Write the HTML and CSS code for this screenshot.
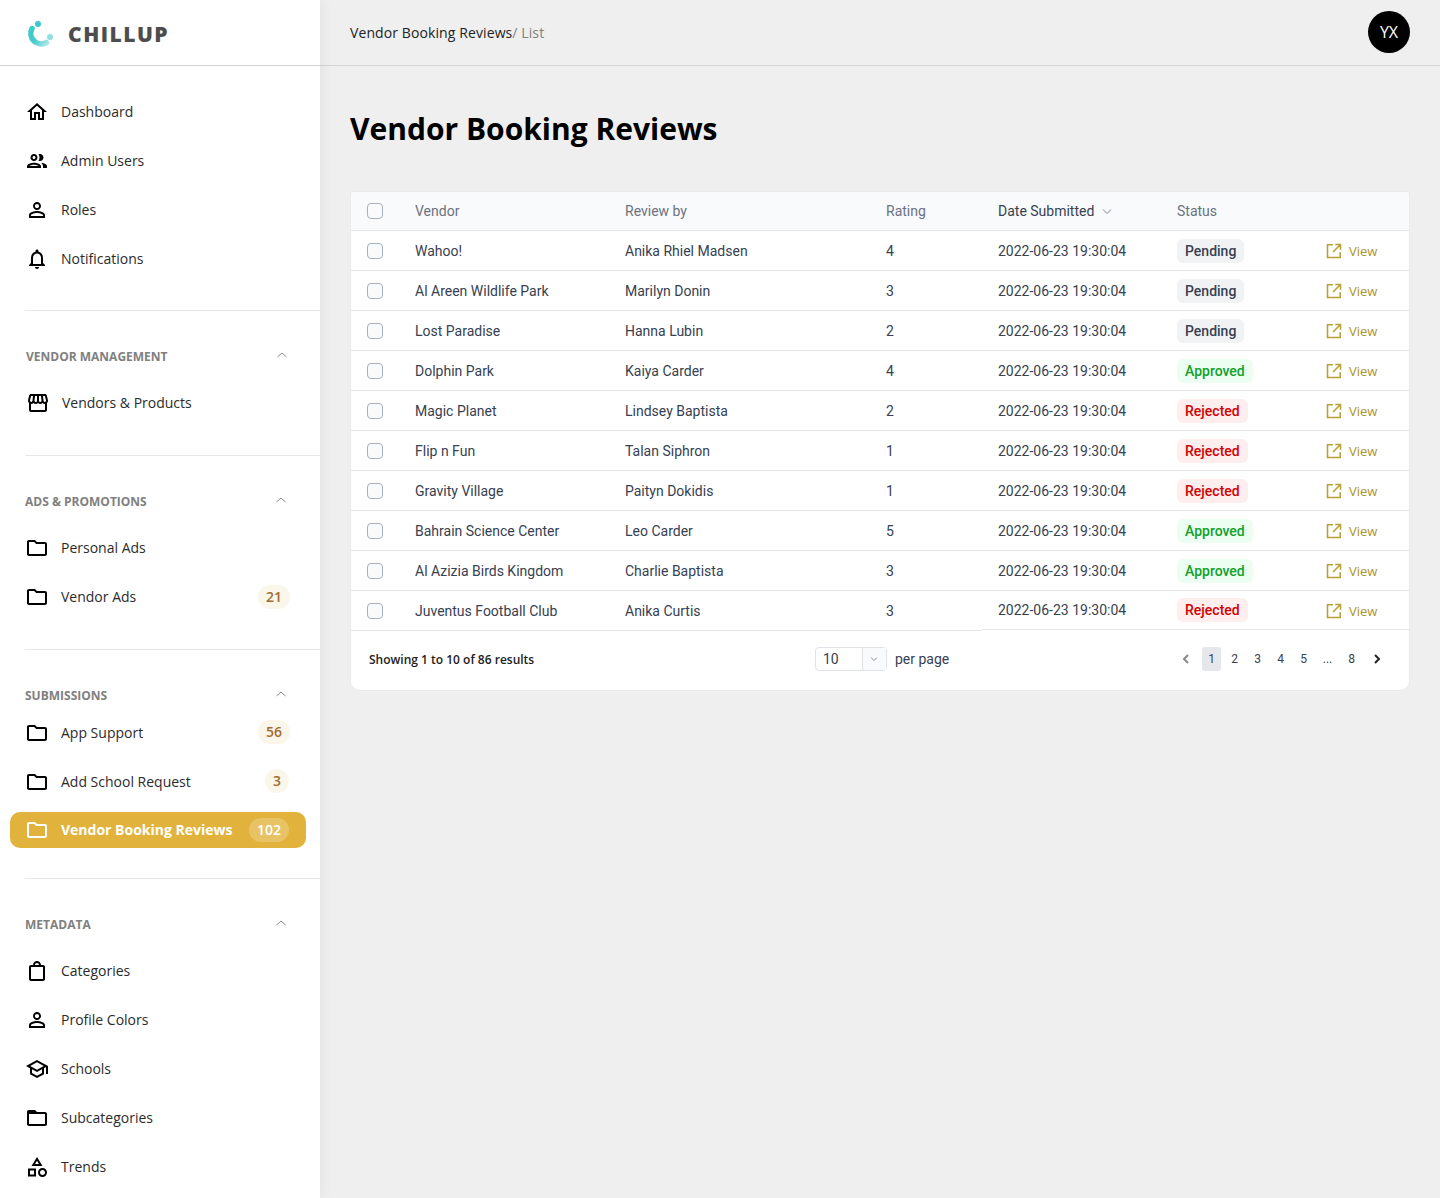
FILE: index.html
```html
<!DOCTYPE html>
<html>
<head>
  <title>Vendor Booking Reviews</title>
  <link rel="stylesheet" href="styles.css">
</head>
<body>
  <svg class="sprite" xmlns="http://www.w3.org/2000/svg">
    <symbol id="i-home" viewBox="0 0 24 24"><path d="M12 5.69l5 4.5V18h-2v-6H9v6H7v-7.81l5-4.5M12 3L2 12h3v8h6v-6h2v6h6v-8h3L12 3z"/></symbol>
    <symbol id="i-people" viewBox="0 0 24 24"><path d="M9 13.75c-2.34 0-7 1.17-7 3.5V19h14v-1.75c0-2.33-4.66-3.5-7-3.5zM4.34 17c.84-.58 2.87-1.25 4.66-1.25s3.82.67 4.66 1.25H4.34zM9 12c1.93 0 3.5-1.57 3.5-3.5S10.93 5 9 5 5.5 6.57 5.5 8.5 7.07 12 9 12zm0-5c.83 0 1.5.67 1.5 1.5S9.83 10 9 10s-1.5-.67-1.5-1.5S8.17 7 9 7zm7.04 6.81c1.16.84 1.96 1.96 1.96 3.44V19h4v-1.75c0-2.02-3.5-3.17-5.96-3.44zM15 12c1.93 0 3.5-1.57 3.5-3.5S16.93 5 15 5c-.54 0-1.04.13-1.5.35.63.89 1 1.98 1 3.15s-.37 2.26-1 3.15c.46.22.96.35 1.5.35z"/></symbol>
    <symbol id="i-person" viewBox="0 0 24 24"><path d="M12 5.9c1.16 0 2.1.94 2.1 2.1s-.94 2.1-2.1 2.1S9.9 9.16 9.9 8s.94-2.1 2.1-2.1m0 9c2.97 0 6.1 1.46 6.1 2.1v1.1H5.9V17c0-.64 3.13-2.1 6.1-2.1M12 4C9.79 4 8 5.79 8 8s1.79 4 4 4 4-1.79 4-4-1.79-4-4-4zm0 9c-2.67 0-8 1.34-8 4v3h16v-3c0-2.66-5.33-4-8-4z"/></symbol>
    <symbol id="i-bell" viewBox="0 0 24 24"><path d="M12 22c1.1 0 2-.9 2-2h-4c0 1.1.9 2 2 2zm6-6v-5c0-3.07-1.63-5.64-4.5-6.32V4c0-.83-.67-1.5-1.5-1.5s-1.5.67-1.5 1.5v.68C7.64 5.36 6 7.92 6 11v5l-2 2v1h16v-1l-2-2zm-2 1H8v-6c0-2.48 1.51-4.5 4-4.5s4 2.02 4 4.5v6z"/></symbol>
    <symbol id="i-store" viewBox="0 0 24 24"><path d="M21.9 8.89l-1.05-4.37c-.22-.9-1-1.52-1.91-1.52H5.05c-.9 0-1.69.63-1.9 1.52L2.1 8.89c-.24 1.02-.02 2.06.62 2.88.08.11.19.19.28.29V19c0 1.1.9 2 2 2h14c1.1 0 2-.9 2-2v-6.94c.09-.09.2-.18.28-.28.64-.82.87-1.87.62-2.89zm-2.99-3.9l1.05 4.37c.1.42.01.84-.25 1.17-.14.18-.44.47-.94.47-.61 0-1.14-.49-1.21-1.14L16.98 5l1.93-.01zM13 5h1.96l.54 4.52c.05.39-.07.78-.33 1.07-.22.26-.54.41-.95.41-.67 0-1.22-.59-1.22-1.31V5zM8.49 9.52L9.04 5H11v4.69c0 .72-.55 1.31-1.29 1.31-.34 0-.65-.15-.89-.41-.25-.29-.37-.68-.33-1.07zm-4.45-.16L5.05 5h1.97l-.58 4.86c-.08.65-.6 1.14-1.21 1.14-.49 0-.8-.29-.93-.47-.27-.32-.36-.75-.26-1.17zM5 19v-6.03c.08.01.15.03.23.03.87 0 1.66-.36 2.24-.95.6.6 1.4.95 2.31.95.87 0 1.65-.36 2.23-.93.59.57 1.39.93 2.29.93.84 0 1.64-.35 2.24-.95.58.59 1.37.95 2.24.95.08 0 .15-.02.23-.03V19H5z"/></symbol>
    <symbol id="i-folder" viewBox="0 0 24 24"><path d="M9.17 6l2 2H20v10H4V6h5.17M10 4H4c-1.1 0-1.99.9-1.99 2L2 18c0 1.1.9 2 2 2h16c1.1 0 2-.9 2-2V8c0-1.1-.9-2-2-2h-8l-2-2z"/></symbol>
    <symbol id="i-folder-open" viewBox="0 0 24 24"><path d="M20 6h-8l-2-2H4c-1.1 0-1.99.9-1.99 2L2 18c0 1.1.9 2 2 2h16c1.1 0 2-.9 2-2V8c0-1.1-.9-2-2-2zm0 12H4V8h16v10z"/></symbol>
    <symbol id="i-bag" viewBox="0 0 24 24"><path d="M18 6h-2c0-2.21-1.79-4-4-4S8 3.79 8 6H6c-1.1 0-2 .9-2 2v12c0 1.1.9 2 2 2h12c1.1 0 2-.9 2-2V8c0-1.1-.9-2-2-2zm-6-2c1.1 0 2 .9 2 2h-4c0-1.1.9-2 2-2zm6 16H6V8h12v12z"/></symbol>
    <symbol id="i-school" viewBox="0 0 24 24"><path d="M12 3L1 9l4 2.18v6L12 21l7-3.82v-6l2-1.09V17h2V9L12 3zm6.82 6L12 12.72 5.18 9 12 5.28 18.82 9zM17 15.99l-5 2.73-5-2.73v-3.72L12 15l5-2.73v3.72z"/></symbol>
    <symbol id="i-shapes" viewBox="0 0 24 24"><path d="M12 2l-5.5 9h11L12 2zm0 3.84L13.93 9h-3.87L12 5.84zM17.5 13c-2.49 0-4.5 2.01-4.5 4.5s2.01 4.5 4.5 4.5 4.5-2.01 4.5-4.5-2.01-4.5-4.5-4.5zm0 7c-1.38 0-2.5-1.12-2.5-2.5s1.12-2.5 2.5-2.5 2.5 1.12 2.5 2.5-1.12 2.5-2.5 2.5zM3 21.5h8v-8H3v8zm2-6h4v4H5v-4z"/></symbol>
    <symbol id="i-up" viewBox="0 0 12 12"><path d="M1.500 8L6 4l4.500 4" fill="none" stroke="currentColor" stroke-width="1"/></symbol>
    <symbol id="i-external" viewBox="0 0 16 16"><path d="M7 1.800H1.500V14.500H14.200V9.200M9.200 1.500h5.300v5.300M14.500 1.500L7 9" fill="none" stroke="currentColor" stroke-width="1.600"/></symbol>
    <linearGradient id="logo-arc" gradientUnits="userSpaceOnUse" x1="4" y1="14" x2="24" y2="28">
      <stop offset="0.3" stop-color="#3fcbcb"/>
      <stop offset="1" stop-color="#c4eeee"/>
    </linearGradient>
  </svg>

  <div class="layout">
    <aside class="sidebar">
      <div class="brand">
        <svg class="brand-mark" viewBox="0 0 30 30">
          <path d="M7 8.500A10.500 10.500 0 0 0 21.500 22.500" fill="none" stroke="url(#logo-arc)" stroke-width="5.500" stroke-linecap="round"/>
          <circle cx="13" cy="4" r="3" fill="#3cc6cf"/>
          <circle cx="25" cy="17" r="3" fill="#8fdfe0"/>
        </svg>
        <span class="brand-name">CHILLUP</span>
      </div>

      <nav class="nav-top">
        <a class="nav-item"><svg class="icon"><use href="#i-home"/></svg><span>Dashboard</span></a>
        <a class="nav-item"><svg class="icon"><use href="#i-people"/></svg><span>Admin Users</span></a>
        <a class="nav-item"><svg class="icon"><use href="#i-person"/></svg><span>Roles</span></a>
        <a class="nav-item"><svg class="icon"><use href="#i-bell"/></svg><span>Notifications</span></a>
      </nav>

      <section class="nav-group nudge">
        <div class="group-title"><span>Vendor Management</span><svg class="chev"><use href="#i-up"/></svg></div>
        <a class="nav-item"><svg class="icon"><use href="#i-store"/></svg><span>Vendors &amp; Products</span></a>
      </section>

      <section class="nav-group">
        <div class="group-title"><span>Ads &amp; Promotions</span><svg class="chev"><use href="#i-up"/></svg></div>
        <a class="nav-item"><svg class="icon"><use href="#i-folder"/></svg><span>Personal Ads</span></a>
        <a class="nav-item"><svg class="icon"><use href="#i-folder"/></svg><span>Vendor Ads</span><b class="count">21</b></a>
      </section>

      <section class="nav-group tight">
        <div class="group-title"><span>Submissions</span><svg class="chev"><use href="#i-up"/></svg></div>
        <a class="nav-item"><svg class="icon"><use href="#i-folder"/></svg><span>App Support</span><b class="count">56</b></a>
        <a class="nav-item"><svg class="icon"><use href="#i-folder"/></svg><span>Add School Request</span><b class="count inset">3</b></a>
        <a class="nav-item active"><svg class="icon"><use href="#i-folder"/></svg><span>Vendor Booking Reviews</span><b class="count inset">102</b></a>
      </section>

      <section class="nav-group">
        <div class="group-title"><span>Metadata</span><svg class="chev"><use href="#i-up"/></svg></div>
        <a class="nav-item"><svg class="icon"><use href="#i-bag"/></svg><span>Categories</span></a>
        <a class="nav-item"><svg class="icon"><use href="#i-person"/></svg><span>Profile Colors</span></a>
        <a class="nav-item"><svg class="icon"><use href="#i-school"/></svg><span>Schools</span></a>
        <a class="nav-item"><svg class="icon"><use href="#i-folder-open"/></svg><span>Subcategories</span></a>
        <a class="nav-item"><svg class="icon"><use href="#i-shapes"/></svg><span>Trends</span></a>
      </section>
    </aside>

    <div class="main">
      <header class="topbar">
        <div class="crumbs">Vendor Booking Reviews<span>/ List</span></div>
        <div class="avatar">YX</div>
      </header>

      <main class="content">
        <h1>Vendor Booking Reviews</h1>

        <div class="card">
          <table>
            <colgroup>
              <col class="c-check"><col class="c-vendor"><col class="c-review"><col class="c-rating"><col class="c-date"><col class="c-status"><col>
            </colgroup>
            <thead>
              <tr>
                <th><i class="check"></i></th>
                <th>Vendor</th>
                <th>Review by</th>
                <th>Rating</th>
                <th class="sorted">Date Submitted<svg class="sort" viewBox="0 0 12 12"><path d="M2 4.500l4 4 4-4" fill="none" stroke="currentColor"/></svg></th>
                <th>Status</th>
                <th></th>
              </tr>
            </thead>
            <tbody>
              <tr><td><i class="check"></i></td><td>Wahoo!</td><td>Anika Rhiel Madsen</td><td>4</td><td>2022-06-23 19:30:04</td><td><span class="pill pending">Pending</span></td><td><a class="view"><svg><use href="#i-external"/></svg>View</a></td></tr>
              <tr><td><i class="check"></i></td><td>Al Areen Wildlife Park</td><td>Marilyn Donin</td><td>3</td><td>2022-06-23 19:30:04</td><td><span class="pill pending">Pending</span></td><td><a class="view"><svg><use href="#i-external"/></svg>View</a></td></tr>
              <tr><td><i class="check"></i></td><td>Lost Paradise</td><td>Hanna Lubin</td><td>2</td><td>2022-06-23 19:30:04</td><td><span class="pill pending">Pending</span></td><td><a class="view"><svg><use href="#i-external"/></svg>View</a></td></tr>
              <tr><td><i class="check"></i></td><td>Dolphin Park</td><td>Kaiya Carder</td><td>4</td><td>2022-06-23 19:30:04</td><td><span class="pill approved">Approved</span></td><td><a class="view"><svg><use href="#i-external"/></svg>View</a></td></tr>
              <tr><td><i class="check"></i></td><td>Magic Planet</td><td>Lindsey Baptista</td><td>2</td><td>2022-06-23 19:30:04</td><td><span class="pill rejected">Rejected</span></td><td><a class="view"><svg><use href="#i-external"/></svg>View</a></td></tr>
              <tr><td><i class="check"></i></td><td>Flip n Fun</td><td>Talan Siphron</td><td>1</td><td>2022-06-23 19:30:04</td><td><span class="pill rejected">Rejected</span></td><td><a class="view"><svg><use href="#i-external"/></svg>View</a></td></tr>
              <tr><td><i class="check"></i></td><td>Gravity Village</td><td>Paityn Dokidis</td><td>1</td><td>2022-06-23 19:30:04</td><td><span class="pill rejected">Rejected</span></td><td><a class="view"><svg><use href="#i-external"/></svg>View</a></td></tr>
              <tr><td><i class="check"></i></td><td>Bahrain Science Center</td><td>Leo Carder</td><td>5</td><td>2022-06-23 19:30:04</td><td><span class="pill approved">Approved</span></td><td><a class="view"><svg><use href="#i-external"/></svg>View</a></td></tr>
              <tr><td><i class="check"></i></td><td>Al Azizia Birds Kingdom</td><td>Charlie Baptista</td><td>3</td><td>2022-06-23 19:30:04</td><td><span class="pill approved">Approved</span></td><td><a class="view"><svg><use href="#i-external"/></svg>View</a></td></tr>
              <tr><td><i class="check"></i></td><td>Juventus Football Club</td><td>Anika Curtis</td><td>3</td><td class="up">2022-06-23 19:30:04</td><td class="up"><span class="pill rejected">Rejected</span></td><td class="up-line"><a class="view"><svg><use href="#i-external"/></svg>View</a></td></tr>
            </tbody>
          </table>

          <div class="card-foot">
            <div class="results">Showing 1 to 10 of 86 results</div>
            <div class="per-page">
              <div class="select"><span>10</span><i><svg viewBox="0 0 12 12"><path d="M3 4.500l3 3 3-3" fill="none" stroke="currentColor"/></svg></i></div>
              <span>per page</span>
            </div>
            <div class="pager">
              <svg class="arrow prev" viewBox="0 0 12 12"><path d="M8 2L4 6l4 4" fill="none" stroke="currentColor" stroke-width="2"/></svg>
              <span class="current">1</span>
              <span>2</span><span>3</span><span>4</span><span>5</span><span class="dots">...</span><span>8</span>
              <svg class="arrow" viewBox="0 0 12 12"><path d="M4 2l4 4-4 4" fill="none" stroke="currentColor" stroke-width="2"/></svg>
            </div>
          </div>
        </div>
      </main>
    </div>
  </div>
</body>
</html>
```
FILE: styles.css
```css
* { box-sizing: border-box; }
html, body { margin: 0; height: 100%; }
body {
  font-family: "Open Sans", sans-serif;
  background: #efefef;
  color: #222;
  overflow: hidden;
}
.sprite { position: absolute; width: 0; height: 0; }
.layout { display: flex; height: 1198px; }

/* sidebar */
.sidebar {
  width: 320px;
  flex: none;
  background: #fff;
  box-shadow: 2px 0 12px rgba(0,0,0,0.06);
  position: relative;
  overflow: hidden;
}
.brand {
  height: 66px;
  display: flex;
  align-items: center;
  gap: 13px;
  padding-left: 25px;
  border-bottom: 1px solid #d4d4d4;
}
.brand-mark { width: 30px; height: 30px; margin-top: 5px; }
.brand-name {
  font-size: 21px;
  font-weight: 800;
  letter-spacing: 1.5px;
  color: #4d4d4d;
  margin-top: 2px;
}
.nav-top { padding: 21px 0 27px; }
.nav-item {
  height: 49px;
  margin: 0 14px 0 10px;
  padding: 0 16px 0 15px;
  display: flex;
  align-items: center;
  font-size: 14px;
  color: #2b2b2b;
}
.icon { width: 24px; height: 24px; margin-right: 12px; flex: none; fill: #000; }
.count {
  margin-left: auto;
  min-width: 24px;
  height: 24px;
  padding: 0 8px;
  border-radius: 12px;
  background: #fbf6ea;
  color: #a26c2e;
  font-weight: 600;
  font-size: 14px;
  line-height: 24px;
  text-align: center;
}
.count.inset { margin-right: 1px; }
.tight .count { margin-bottom: 2px; }
.nav-item.active {
  height: 36px;
  margin-top: 6px;
  border-radius: 10px;
  background: #e2b33c;
  color: #fff;
  font-weight: 700;
}
.active span { margin-bottom: 2px; }
.active .icon { fill: #fff; }
.tight .active .count { margin-bottom: 0; background: rgba(255,255,255,0.22); color: #fff; font-weight: 600; }

.nav-group {
  margin-left: 25px;
  border-top: 1px solid #e5e7eb;
  padding-top: 35px;
  padding-bottom: 28px;
}
.nav-group .nav-item { margin-left: -15px; }
.group-title {
  height: 20px;
  margin-bottom: 12px;
  padding-right: 33px;
  display: flex;
  align-items: center;
  justify-content: space-between;
  font-size: 12px;
  font-weight: 700;
  text-transform: uppercase;
  color: #808080;
}
.chev { width: 12px; height: 12px; color: #8a8a8a; margin-top: -3px; }
.nudge .group-title { padding-left: 1px; padding-right: 32px; }
.nudge .nav-item { padding-left: 16px; }
.tight { padding-bottom: 30px; }
.tight .group-title { margin-bottom: 3px; }

/* main column */
.main { flex: 1; min-width: 0; }
.topbar {
  height: 66px;
  padding: 0 30px;
  display: flex;
  align-items: center;
  justify-content: space-between;
  border-bottom: 1px solid #d4d4d4;
}
.crumbs { font-size: 14px; letter-spacing: 0.1px; color: #222; }
.crumbs span { color: #808080; }
.avatar {
  width: 42px;
  height: 42px;
  border-radius: 50%;
  background: #000;
  color: #fff;
  font-size: 16px;
  line-height: 42px;
  text-align: center;
  margin-top: -1px;
}
.content { padding: 0 30px; }
h1 {
  margin: 0;
  padding: 41px 0 40px;
  font-size: 30px;
  font-weight: 700;
  line-height: 44px;
  color: #000;
}

/* table card */
.card {
  background: #fff;
  border: 1px solid #e9eaec;
  border-radius: 4px 4px 10px 10px;
  overflow: hidden;
  font-family: Roboto, sans-serif;
}
table { width: 100%; border-collapse: separate; border-spacing: 0; table-layout: fixed; font-size: 14px; }
.c-check { width: 48px; }
.c-vendor { width: 210px; }
.c-review { width: 261px; }
.c-rating { width: 112px; }
.c-date { width: 179px; }
.c-status { width: 149px; }
th, td { height: 40px; padding: 0 0 0 16px; text-align: left; border-bottom: 1px solid #e5e7eb; white-space: nowrap; }
th { height: 39px; background: #f9fafb; font-weight: 400; color: #6b7280; }
td { color: #374151; }
th.sorted { color: #374151; }
.sort { width: 12px; height: 12px; margin-left: 7px; color: #7b8390; vertical-align: -1px; }
.check {
  display: block;
  width: 16px;
  height: 16px;
  border: 1px solid #a8b0ba;
  border-radius: 4px;
  background: #f9fafb;
}
.pill {
  display: inline-block;
  height: 24px;
  padding: 0 8px;
  border-radius: 6px;
  font-weight: 500;
  line-height: 24px;
}
.pending { background: #f1f2f4; color: #374151; }
.approved { background: #ecfdf1; color: #12a02c; }
.rejected { background: #ffeeee; color: #d10000; }
.view { display: flex; align-items: center; gap: 7px; font-family: "Open Sans", sans-serif; font-size: 13px; color: #a8962a; }
.view svg { width: 16px; height: 16px; color: #b8a137; }
/* the last row's right side sits a pixel higher, as in the app */
td.up, td.up-line { box-shadow: inset 0 -1px 0 #e5e7eb; border-bottom-color: #fff; }
td.up { padding-bottom: 2px; }

.card-foot {
  height: 59px;
  display: flex;
  align-items: center;
  padding: 0 26px 3px 18px;
  font-family: Roboto, sans-serif;
  font-size: 12px;
  color: #374151;
}
.results { width: 446px; font-family: "Open Sans", sans-serif; font-weight: 600; color: #222; }
.per-page { display: flex; align-items: center; gap: 8px; font-size: 14px; }
.select {
  width: 72px;
  height: 24px;
  display: flex;
  border: 1px solid #dfe2e6;
  border-radius: 4px;
  line-height: 22px;
}
.select span { flex: 1; padding-left: 7px; }
.select i { width: 24px; display: block; background: #f9fafb; border-left: 1px solid #dfe2e6; color: #8a919b; padding: 5px 5px; }
.select svg { width: 12px; height: 12px; display: block; }
.pager { margin-left: auto; display: flex; align-items: center; }
.pager span { width: 23px; height: 24px; line-height: 24px; text-align: center; }
.pager .current { width: 19px; margin: 0 2px 0 0; border-radius: 3px; background: #e5e7eb; }
.pager .dots { width: 25px; }
.arrow { width: 12px; height: 12px; color: #222; margin-left: 8px; }
.arrow.prev { color: #8a8a8a; margin: 0 10px 0 0; }
```
